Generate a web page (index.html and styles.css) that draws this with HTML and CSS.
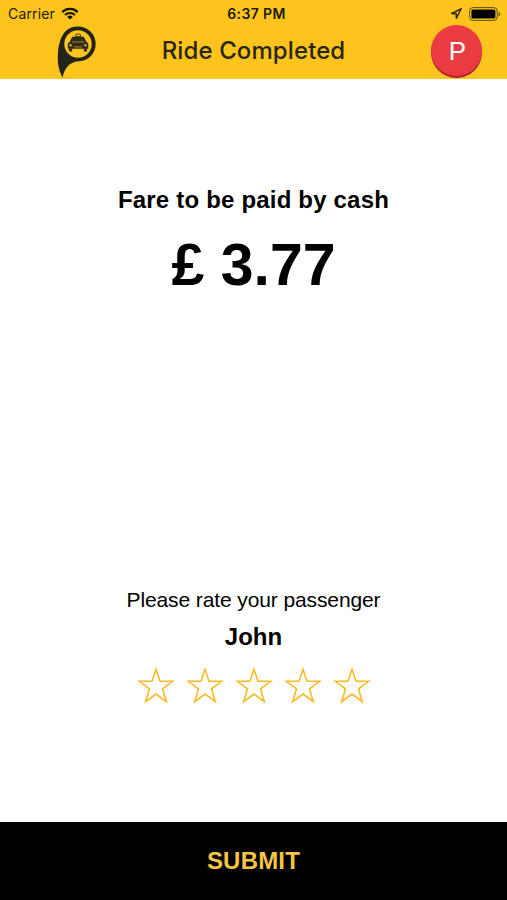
FILE: index.html
```
<!DOCTYPE html>
<html lang="en">
<head>
  <meta charset="UTF-8" />
  <meta name="viewport" content="width=device-width, initial-scale=1.0"/>
  <title>Ride Completed</title>
  <link rel="stylesheet" href="styles.css">
</head>
<body>
  <div class="screen">
    <header class="top">
      <div class="status-bar">
        <div class="carrier">
          <span>Carrier</span>
          <svg class="wifi" viewBox="0 0 18 13">
            <path d="M1.3 5.1a11 11 0 0 1 15.4 0M4.1 8a7 7 0 0 1 9.8 0" fill="none" stroke="#151305" stroke-width="2.2"/>
            <path d="M9 12.6L6.2 9.9a4 4 0 0 1 5.6 0z" fill="#151305"/>
          </svg>
        </div>
        <div class="time">6:37 PM</div>
        <div class="indicators">
          <svg class="location" viewBox="0 0 12 12">
            <path d="M11 1L1.2 5.6l5 .1.1 4.900z" fill="none" stroke="#2b2509" stroke-width="1.400"/>
          </svg>
          <svg class="battery" viewBox="0 0 32 14">
            <rect x=".6" y=".6" width="27.600" height="12.800" rx="3.400" fill="none" stroke="#5b4a0e" stroke-width="1"/>
            <rect x="2.400" y="2.400" width="24" height="9.200" rx="1.600" fill="#000"/>
            <path d="M29.600 4.700c2 .7 2 3.900 0 4.600z" fill="#5b4a0e"/>
          </svg>
        </div>
      </div>
      <div class="nav-bar">
        <svg class="logo" viewBox="0 0 40 52">
          <path d="M5.600 51.500C1.500 44 .4 36.500 .9 29C1.400 16 5.500 .5 20.500 .5C31 .5 38.700 8 38.700 17.800C38.700 27.600 31.500 35 22 35.200C15.500 35.500 8 39 5.600 51.500z" fill="#22241c"/>
          <circle cx="21" cy="18" r="13.700" fill="#fcc41d"/>
          <path d="M18.300 10.500l.8-2.400h4l.8 2.400z" fill="none" stroke="#54461a" stroke-width="1"/>
          <path d="M15.200 10.800h11.600l2.700 5.200c1.300.4 1.800 1.300 1.800 2.800v4H10.800v-4c0-1.500.5-2.400 1.800-2.800z" fill="#302c18"/>
          <path d="M12 22.600h3.200v2.800h-3.200zM26.800 22.600h3.200v2.800h-3.200z" fill="#302c18"/>
          <path d="M15 16h12M17 20.900h8" stroke="#b58f1d" stroke-width=".9"/>
          <circle cx="13.600" cy="19.200" r="1.200" fill="#d8a91d"/>
          <circle cx="28.400" cy="19.200" r="1.200" fill="#d8a91d"/>
        </svg>
        <h1>Ride Completed</h1>
        <div class="avatar">P</div>
      </div>
    </header>

    <main class="content">
      <section class="fare">
        <h2>Fare to be paid by cash</h2>
        <p class="amount">£ 3.77</p>
      </section>

      <section class="rating">
        <p>Please rate your passenger</p>
        <h3>John</h3>
        <div class="stars">
          <svg viewBox="0 0 38 38"><path d="M19 2.300L23 14.300H35.700L25.500 21.800L29.300 34.700L19 27L8.700 34.700L12.500 21.800L2.300 14.300H15z"/></svg>
          <svg viewBox="0 0 38 38"><path d="M19 2.300L23 14.300H35.700L25.500 21.800L29.300 34.700L19 27L8.700 34.700L12.500 21.800L2.300 14.300H15z"/></svg>
          <svg viewBox="0 0 38 38"><path d="M19 2.300L23 14.300H35.700L25.500 21.800L29.300 34.700L19 27L8.700 34.700L12.500 21.800L2.300 14.300H15z"/></svg>
          <svg viewBox="0 0 38 38"><path d="M19 2.300L23 14.300H35.700L25.500 21.800L29.300 34.700L19 27L8.700 34.700L12.500 21.800L2.300 14.300H15z"/></svg>
          <svg viewBox="0 0 38 38"><path d="M19 2.300L23 14.300H35.700L25.500 21.800L29.300 34.700L19 27L8.700 34.700L12.500 21.800L2.300 14.300H15z"/></svg>
        </div>
      </section>
    </main>

    <button class="submit" type="button">SUBMIT</button>
  </div>
</body>
</html>
```
FILE: styles.css
```
* {
  box-sizing: border-box;
}

body {
  font-family: 'Liberation Sans', Arial, sans-serif;
  margin: 0;
  background: #fff;
  color: #000;
}

h1,
h2,
h3,
p {
  margin: 0;
}

svg {
  display: block;
}

.screen {
  display: flex;
  flex-direction: column;
  height: 900px;
}

.top {
  height: 79px;
  background: #fcc41d;
  font-family: Inter, sans-serif;
}

.status-bar {
  display: grid;
  grid-template-columns: 1fr auto 1fr;
  align-items: center;
  height: 25px;
  padding: 1px 6px 0 8px;
  font-size: 14px;
  line-height: 25px;
  color: #1d1a08;
}

.carrier {
  display: flex;
  align-items: center;
  gap: 6px;
  letter-spacing: 0.15px;
}

.wifi {
  width: 18px;
  height: 13px;
}

.time {
  padding-left: 4px;
  font-weight: 600;
  letter-spacing: 0.4px;
}

.indicators {
  display: flex;
  align-items: center;
  justify-content: flex-end;
  gap: 7px;
}

.location {
  width: 12px;
  height: 12px;
}

.battery {
  width: 32px;
  height: 14px;
}

.nav-bar {
  display: grid;
  grid-template-columns: 1fr auto 1fr;
  align-items: start;
  height: 54px;
  padding: 0 25px;
}

.logo {
  width: 40px;
  height: 52px;
  margin: 1px 0 0 32px;
}

.nav-bar h1 {
  font-size: 24px;
  font-weight: 450;
  line-height: 52px;
  letter-spacing: 0.1px;
  color: #2a260d;
}

.avatar {
  justify-self: end;
  width: 51px;
  height: 51px;
  border-radius: 50%;
  background: #eb3b43;
  box-shadow: 0 2px 0 #a9252c;
  color: #fff;
  font-family: 'Liberation Sans', Arial, sans-serif;
  font-size: 26px;
  line-height: 53px;
  text-indent: 2px;
  text-align: center;
}

.content {
  display: flex;
  flex-direction: column;
  justify-content: space-between;
  flex: 1;
  padding: 107px 0 117px;
  text-align: center;
}

.fare h2 {
  font-size: 24px;
  line-height: 28px;
  letter-spacing: 0.19px;
}

.amount {
  margin-top: 17px;
  font-size: 59px;
  font-weight: bold;
  line-height: 68px;
}

.rating p {
  font-size: 21px;
  line-height: 24px;
  letter-spacing: -0.11px;
}

.rating h3 {
  margin-top: 11px;
  font-size: 24px;
  line-height: 28px;
}

.stars {
  display: flex;
  justify-content: center;
  gap: 11px;
  margin-top: 16px;
}

.stars svg {
  width: 38px;
  height: 38px;
  fill: none;
  stroke: #fbba27;
  stroke-width: 1.6;
}

.submit {
  height: 78px;
  border: none;
  padding: 0;
  background: #000;
  color: #f6c544;
  font-family: inherit;
  font-size: 24px;
  font-weight: bold;
  letter-spacing: 0.2px;
  cursor: pointer;
}
```
